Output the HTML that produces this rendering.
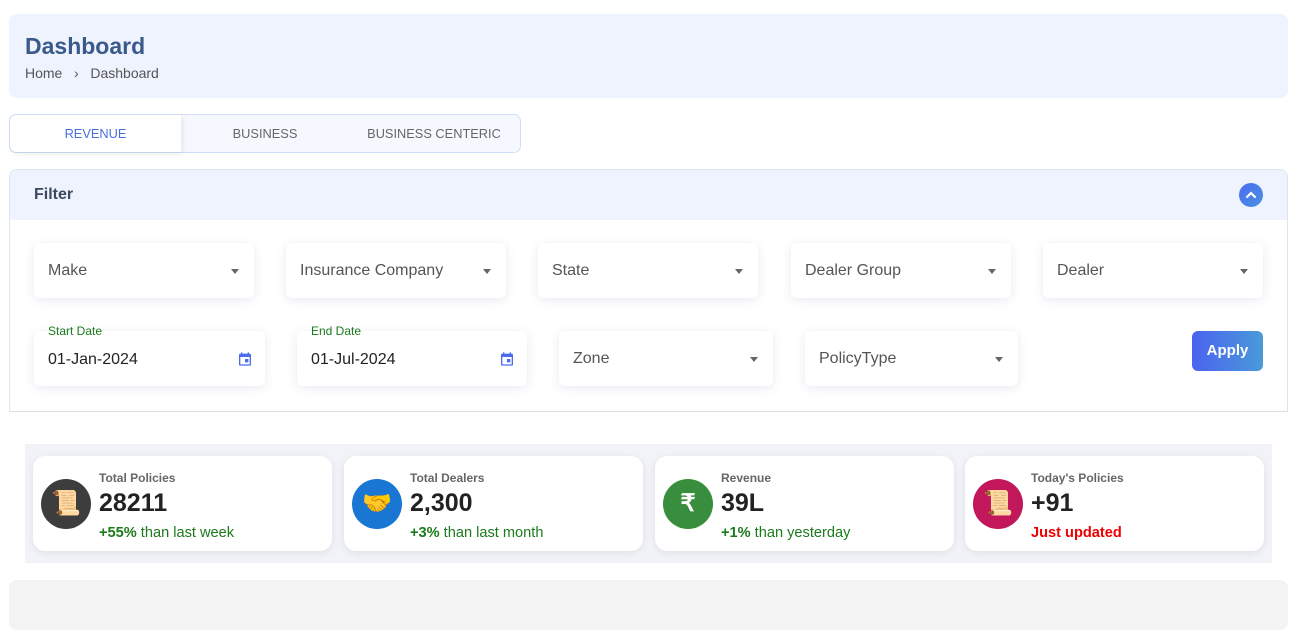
<!DOCTYPE html>
<html><head><style>
*{box-sizing:border-box;margin:0;padding:0}
body{width:1299px;height:617px;overflow:hidden;background:#fff;font-family:"Liberation Sans",sans-serif;position:relative}
.abs{position:absolute}
.hdr{left:9px;top:14px;width:1279px;height:84px;background:#eef3fd;border-radius:8px}
.hdr h1{position:absolute;left:16px;top:19px;font-size:23px;color:#3a5a8c;font-weight:bold}
.hdr .bc{position:absolute;left:16px;top:51px;font-size:14px;color:#555}
.tabs{left:9px;top:114px;width:512px;height:39px;border:1px solid #cfdff7;border-radius:7px;background:#f5f9ff}
.tab{position:absolute;top:0;height:37px;line-height:37px;font-size:12.8px;color:#666;text-align:center}
.tab.act{left:0;width:171px;background:#fff;color:#4b6de0;border-radius:7px 0 0 7px;box-shadow:2px 2px 6px rgba(0,0,0,.08)}
.panel{left:9px;top:169px;width:1279px;height:243px;border:1px solid #dfe4f0;border-bottom-color:#ddd;border-radius:8px 8px 0 0;overflow:hidden}
.ph{height:50px;background:#eef3fd;position:relative}
.ph span{position:absolute;left:24px;top:16px;font-size:16px;color:#3b4a60;font-weight:bold}
.ph i{position:absolute;left:1229px;top:13px;width:24px;height:24px;border-radius:50%;background:linear-gradient(135deg,#4a6cf0,#4a90e0)}
.sel{position:absolute;background:#fff;border-radius:6px;box-shadow:0 2px 10px rgba(60,80,140,.12);font-size:16px;color:#555}
.sel .t{position:absolute;left:14px;top:19px}
.sel .a{position:absolute;right:15px;top:26px;width:0;height:0;border-left:4.5px solid transparent;border-right:4.5px solid transparent;border-top:5px solid #666}
.sel .l{position:absolute;left:14px;top:-7px;font-size:12px;color:#1b7a1b}
.sel .d{position:absolute;left:14px;top:20px;font-size:16px;color:#222}
.apply{left:1192px;top:331px;width:71px;height:40px;border-radius:6px;background:linear-gradient(90deg,#4a63f0,#4a9ad8);color:#fff;font-size:15px;font-weight:bold;text-align:center;line-height:40px}
.band{left:25px;top:444px;width:1247px;height:119px;background:#f1f3f8}
.card{position:absolute;top:456px;width:299px;height:95px;background:#fff;border-radius:12px;box-shadow:0 2px 8px rgba(0,0,0,.08)}
.card .ic{position:absolute;left:8px;top:23px;width:50px;height:50px;border-radius:50%;text-align:center;line-height:50px;font-size:24px}
.card .k{position:absolute;left:66px;top:15px;font-size:12px;color:#666;font-weight:bold}
.card .v{position:absolute;left:66px;top:33px;font-size:25px;color:#222;font-weight:bold}
.card .s{position:absolute;left:66px;top:69px;font-size:14.6px;color:#1b7a1b}
.bot{left:9px;top:580px;width:1279px;height:50px;background:#f3f3f3;border-radius:8px}
</style></head><body>
<div class="abs hdr"><h1>Dashboard</h1><div class="bc">Home &nbsp;&nbsp;›&nbsp;&nbsp; Dashboard</div></div>
<div class="abs tabs">
<div class="tab act">REVENUE</div>
<div class="tab" style="left:171px;width:168px">BUSINESS</div>
<div class="tab" style="left:339px;width:170px">BUSINESS CENTERIC</div>
</div>
<div class="abs panel"><div class="ph"><span>Filter</span><i><svg width="24" height="24" viewBox="0 0 24 24"><path d="M8 14l4-4 4 4" stroke="#fff" stroke-width="2.2" fill="none" stroke-linecap="round"/></svg></i></div></div>
<div class="sel" style="left:34px;top:243px;width:220px;height:55px"><span class="t">Make</span><span class="a"></span></div>
<div class="sel" style="left:286px;top:243px;width:220px;height:55px"><span class="t">Insurance Company</span><span class="a"></span></div>
<div class="sel" style="left:538px;top:243px;width:220px;height:55px"><span class="t">State</span><span class="a"></span></div>
<div class="sel" style="left:791px;top:243px;width:220px;height:55px"><span class="t">Dealer Group</span><span class="a"></span></div>
<div class="sel" style="left:1043px;top:243px;width:220px;height:55px"><span class="t">Dealer</span><span class="a"></span></div>
<div class="sel" style="left:34px;top:331px;width:231px;height:55px"><span class="l" style="top:-7px">Start Date</span><span class="d">01-Jan-2024</span><svg class="abs" style="right:12px;top:20px" width="16" height="16" viewBox="0 0 24 24"><path fill="#4a6cf0" d="M19 4h-1V2h-2v2H8V2H6v2H5a2 2 0 00-2 2v14a2 2 0 002 2h14a2 2 0 002-2V6a2 2 0 00-2-2zm0 16H5V9h14zM12 12h5v5h-5z"/></svg></div>
<div class="sel" style="left:297px;top:331px;width:230px;height:55px"><span class="l">End Date</span><span class="d">01-Jul-2024</span><svg class="abs" style="right:12px;top:20px" width="16" height="16" viewBox="0 0 24 24"><path fill="#4a6cf0" d="M19 4h-1V2h-2v2H8V2H6v2H5a2 2 0 00-2 2v14a2 2 0 002 2h14a2 2 0 002-2V6a2 2 0 00-2-2zm0 16H5V9h14zM12 12h5v5h-5z"/></svg></div>
<div class="sel" style="left:559px;top:331px;width:214px;height:55px"><span class="t">Zone</span><span class="a"></span></div>
<div class="sel" style="left:805px;top:331px;width:213px;height:55px"><span class="t">PolicyType</span><span class="a"></span></div>
<div class="abs apply">Apply</div>
<div class="abs band"></div>
<div class="card" style="left:33px"><div class="ic" style="background:#3d3d3d">📜</div><div class="k">Total Policies</div><div class="v">28211</div><div class="s"><b>+55%</b> than last week</div></div>
<div class="card" style="left:344px"><div class="ic" style="background:#1976d2">🤝</div><div class="k">Total Dealers</div><div class="v">2,300</div><div class="s"><b>+3%</b> than last month</div></div>
<div class="card" style="left:655px"><div class="ic" style="background:#388e3c;color:#fff;font-weight:bold">₹</div><div class="k">Revenue</div><div class="v">39L</div><div class="s"><b>+1%</b> than yesterday</div></div>
<div class="card" style="left:965px"><div class="ic" style="background:#c2185b">📜</div><div class="k">Today's Policies</div><div class="v">+91</div><div class="s" style="color:#e00;font-weight:bold">Just updated</div></div>
<div class="abs bot"></div>
</body></html>
